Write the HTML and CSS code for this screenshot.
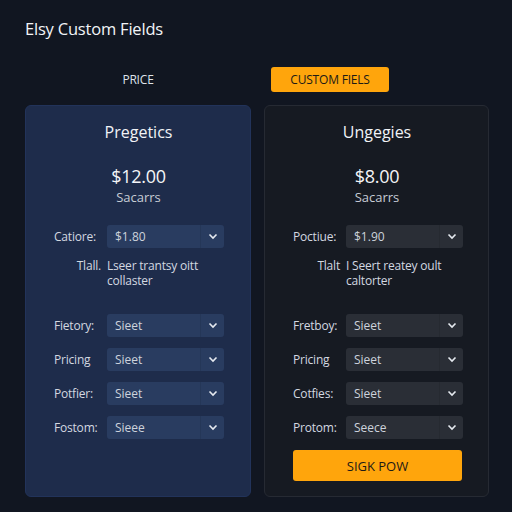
FILE: index.html
```html
<!DOCTYPE html>
<html>
<head>
<meta charset="utf-8">
<link rel="stylesheet" href="styles.css">
</head>
<body>
<div class="page">
  <h1 class="title">Elsy Custom Fields</h1>
  <div class="tabs">
    <div class="tab tab-plain">PRICE</div>
    <div class="tab-cell"><button class="tab tab-active">CUSTOM FIELS</button></div>
  </div>
  <div class="cards">
    <section class="card card-blue">
      <div class="card-title">Pregetics</div>
      <div class="price">$12.00</div>
      <div class="sub">Sacarrs</div>
      <div class="row first">
        <span class="label">Catiore:</span>
        <div class="select"><span class="val">$1.80</span><span class="chev"><svg width="10" height="7" viewBox="0 0 10 7"><path d="M1.5 1.5 5 5 8.5 1.5" fill="none" stroke="#e6eaf0" stroke-width="1.6"/></svg></span></div>
      </div>
      <div class="row note">
        <span class="label right">Tlall.</span>
        <span class="note-text">Lseer trantsy oitt collaster</span>
      </div>
      <div class="fields">
        <div class="row"><span class="label">Fietory:</span><div class="select"><span class="val">Sieet</span><span class="chev"><svg width="10" height="7" viewBox="0 0 10 7"><path d="M1.5 1.5 5 5 8.5 1.5" fill="none" stroke="#e6eaf0" stroke-width="1.6"/></svg></span></div></div>
        <div class="row"><span class="label">Pricing</span><div class="select"><span class="val">Sieet</span><span class="chev"><svg width="10" height="7" viewBox="0 0 10 7"><path d="M1.5 1.5 5 5 8.5 1.5" fill="none" stroke="#e6eaf0" stroke-width="1.6"/></svg></span></div></div>
        <div class="row"><span class="label">Potfier:</span><div class="select"><span class="val">Sieet</span><span class="chev"><svg width="10" height="7" viewBox="0 0 10 7"><path d="M1.5 1.5 5 5 8.5 1.5" fill="none" stroke="#e6eaf0" stroke-width="1.6"/></svg></span></div></div>
        <div class="row"><span class="label">Fostom:</span><div class="select"><span class="val">Sieee</span><span class="chev"><svg width="10" height="7" viewBox="0 0 10 7"><path d="M1.5 1.5 5 5 8.5 1.5" fill="none" stroke="#e6eaf0" stroke-width="1.6"/></svg></span></div></div>
      </div>
    </section>
    <section class="card card-dark">
      <div class="card-title">Ungegies</div>
      <div class="price">$8.00</div>
      <div class="sub">Sacarrs</div>
      <div class="row first">
        <span class="label">Poctiue:</span>
        <div class="select"><span class="val">$1.90</span><span class="chev"><svg width="10" height="7" viewBox="0 0 10 7"><path d="M1.5 1.5 5 5 8.5 1.5" fill="none" stroke="#e6eaf0" stroke-width="1.6"/></svg></span></div>
      </div>
      <div class="row note">
        <span class="label right">Tlalt</span>
        <span class="note-text">I Seert reatey oult caltorter</span>
      </div>
      <div class="fields">
        <div class="row"><span class="label">Fretboy:</span><div class="select"><span class="val">Sieet</span><span class="chev"><svg width="10" height="7" viewBox="0 0 10 7"><path d="M1.5 1.5 5 5 8.5 1.5" fill="none" stroke="#e6eaf0" stroke-width="1.6"/></svg></span></div></div>
        <div class="row"><span class="label">Pricing</span><div class="select"><span class="val">Sieet</span><span class="chev"><svg width="10" height="7" viewBox="0 0 10 7"><path d="M1.5 1.5 5 5 8.5 1.5" fill="none" stroke="#e6eaf0" stroke-width="1.6"/></svg></span></div></div>
        <div class="row"><span class="label">Cotfies:</span><div class="select"><span class="val">Sieet</span><span class="chev"><svg width="10" height="7" viewBox="0 0 10 7"><path d="M1.5 1.5 5 5 8.5 1.5" fill="none" stroke="#e6eaf0" stroke-width="1.6"/></svg></span></div></div>
        <div class="row"><span class="label">Protom:</span><div class="select"><span class="val">Seece</span><span class="chev"><svg width="10" height="7" viewBox="0 0 10 7"><path d="M1.5 1.5 5 5 8.5 1.5" fill="none" stroke="#e6eaf0" stroke-width="1.6"/></svg></span></div></div>
      </div>
      <button class="cta">SIGK POW</button>
    </section>
  </div>
</div>
</body>
</html>
```

FILE: styles.css
```css
* { box-sizing: border-box; }
html, body { margin: 0; padding: 0; }
body {
  background: #111621;
  font-family: "Open Sans", "Liberation Sans", sans-serif;
  color: #e8ebf0;
  width: 512px;
  height: 512px;
  overflow: hidden;
}
.page {
  padding: 17px 23px 0 25px;
}
.title {
  margin: 0;
  font-size: 16.5px;
  line-height: 24px;
  font-weight: 400;
  letter-spacing: -0.2px;
  color: #f2f4f7;
}
.tabs {
  display: grid;
  grid-template-columns: 226px 225px;
  column-gap: 13px;
  margin-top: 26px;
  height: 25px;
  align-items: center;
}
.tab {
  font-family: "Open Sans", "Liberation Sans", sans-serif;
  font-size: 12px;
  letter-spacing: -0.2px;
}
.tab-plain {
  text-align: center;
  color: #dfe3ea;
}
.tab-cell { padding-left: 7px; }
.tab-active {
  width: 118px;
  height: 25px;
  border: 0;
  border-radius: 3px;
  background: #ffa50c;
  color: #1c1a16;
  padding: 0;
}
.cards {
  display: grid;
  grid-template-columns: 226px 225px;
  column-gap: 13px;
  margin-top: 13px;
}
.card {
  height: 392px;
  border-radius: 6px;
  padding: 16px 27px 0 28px;
  border: 1px solid transparent;
}
.card-blue {
  background: #1e2c4b;
  border-color: #22335a;
}
.card-dark {
  background: #161a22;
  border-color: #262a33;
}
.card-title {
  text-align: center;
  font-size: 16px;
  line-height: 20px;
  font-weight: 500;
  color: #f1f3f6;
}
.price {
  margin-top: 21px;
  text-align: center;
  font-size: 18px;
  line-height: 26px;
  letter-spacing: -0.3px;
  color: #f4f5f7;
}
.sub {
  text-align: center;
  font-size: 13px;
  line-height: 16px;
  color: #c7ccd5;
}
.row {
  display: grid;
  grid-template-columns: 53px 117px;
  align-items: center;
}
.row.first { margin-top: 20px; }
.label {
  font-size: 12px;
  color: #d3d8e0;
  letter-spacing: -0.2px;
}
.label.right {
  text-align: right;
  padding-right: 6px;
  align-self: start;
}
.row.note {
  margin-top: 10px;
  align-items: start;
}
.note-text {
  font-size: 12px;
  line-height: 15px;
  color: #d3d8e0;
  letter-spacing: -0.2px;
}
.note .label { line-height: 15px; }
.fields {
  margin-top: 26px;
  display: flex;
  flex-direction: column;
  gap: 11px;
}
.select {
  height: 23px;
  border-radius: 3px;
  display: flex;
  align-items: stretch;
  font-size: 12px;
  color: #cdd3dc;
}
.card-blue .select { background: #293c60; }
.card-dark .select { background: #2a2e36; }
.val {
  flex: 1;
  display: flex;
  align-items: center;
  padding-left: 8px;
}
.chev {
  width: 24px;
  display: flex;
  align-items: center;
  justify-content: center;
  border-left: 1px solid rgba(0,0,0,0.08);
}
.cta {
  margin-top: 11px;
  width: 169px;
  height: 31px;
  border: 0;
  border-radius: 3px;
  background: #ffa50c;
  color: #1c1a16;
  font-family: "Open Sans", "Liberation Sans", sans-serif;
  font-size: 13px;
  padding: 0;
}
```
